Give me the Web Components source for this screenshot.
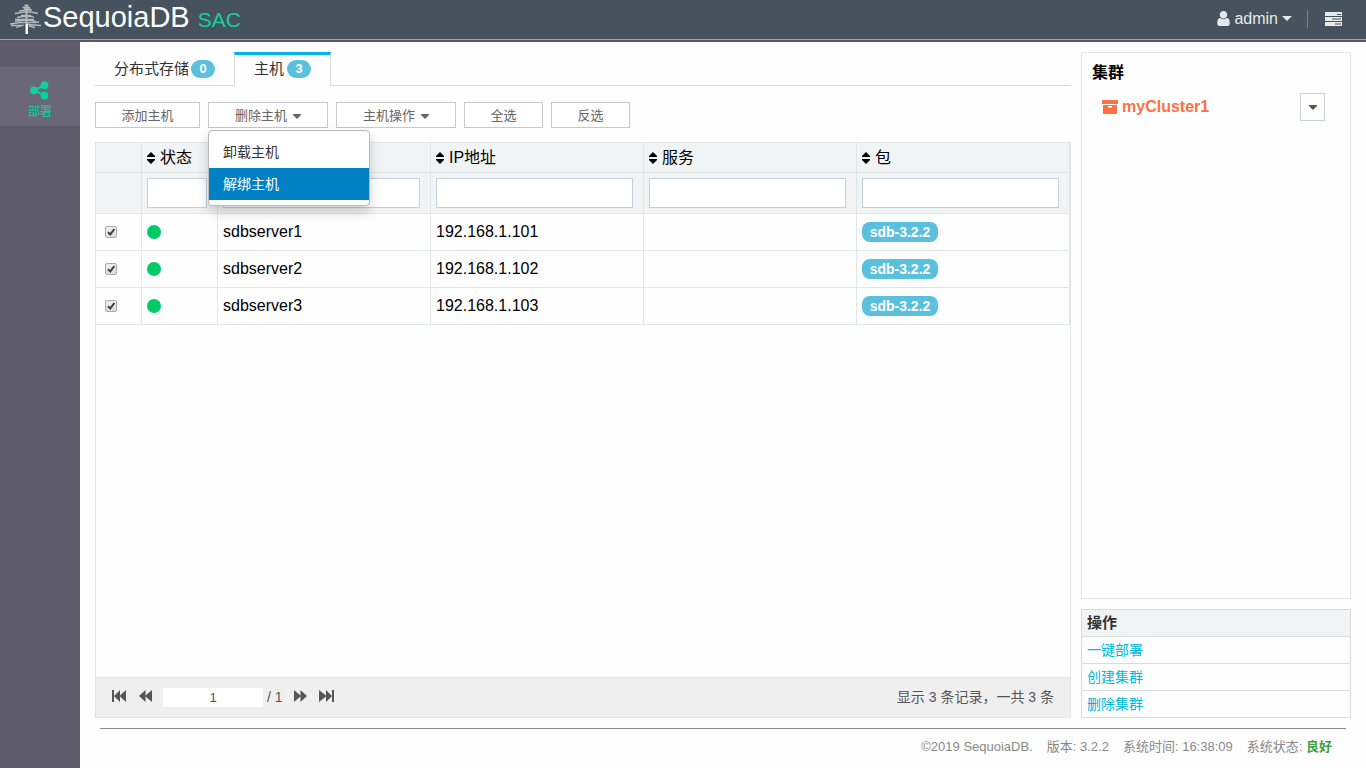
<!DOCTYPE html>
<html lang="zh-CN">
<head>
<meta charset="utf-8">
<title>SequoiaDB SAC</title>
<style>
html, body { margin: 0; height: 100%; background: #fefefe; }
body { font: 14px/20px "Liberation Sans", "Noto Sans CJK SC", sans-serif; color: #333; }
</style>
</head>
<body>
<sac-app></sac-app>
<script>
const define = (name, html, setup) => {
  const t = document.createElement('template');
  t.innerHTML = html;
  customElements.define(name, class extends HTMLElement {
    connectedCallback() {
      if (this.shadowRoot) return;
      this.attachShadow({ mode: 'open' }).append(t.content.cloneNode(true));
      if (setup) setup(this, this.shadowRoot);
    }
  });
};

/* icon: name -> [width, height, markup] */
const ICONS = {
  tree: [32, 31, `<g stroke="#b4babe" stroke-width="1.3" fill="none"><path d="M14.500 2.500h4M12.500 4.500h7.500M14 6.200h7M9 8.200l5-1h8M5 10.500l9-1.500h7l7 1.500M11 12.300h10M7 14.500l6-1h9l2 1M5 16.500h19M5 18.300l8-1h9l4 1.500M0 21l10-1.500h15l4-.5M1 22.500h12M18 21.500l13 1M6 24.500l8-2.500M19 23l6 1.500"/></g><path d="M15.500 1.500h2v18h-2z" fill="#b4babe"/><path d="M15.500 20.500h2.500V31h-2.500z" fill="#fff"/>`],
  user: [13, 15, `<svg viewBox="0 0 1280 1536" width="13" height="15"><path fill="currentColor" d="M1280 1271q0 109-62.5 187t-150.5 78h-854q-88 0-150.5-78t-62.5-187q0-85 8.5-160.5t31.5-152 58.5-131 94-89 134.5-34.5q131 128 313 128t313-128q76 0 134.5 34.5t94 89 58.5 131 31.5 152 8.5 160.5zm-256-887q0 159-112.5 271.5t-271.5 112.5-271.5-112.5-112.5-271.5 112.5-271.5 271.5-112.5 271.5 112.5 112.5 271.5z"/></svg>`],
  caret: [10, 5, `<path fill="currentColor" d="M0 0h10l-5 5z"/>`],
  smallcaret: [8, 5, `<path fill="currentColor" d="M0 0h8v1l-4 4-4-4z"/>`],
  tasks: [17, 14, `<path fill="currentColor" fill-rule="evenodd" d="M0 0h17v4H0zM12 2v1h4V2zM0 5h17v4H0zM7 6.500v1h9v-1zM0 10h17v4H0zM10 11.500v1h6v-1z"/>`],
  share: [20, 19, `<g fill="currentColor"><circle cx="4" cy="9.300" r="3.900"/><circle cx="14.500" cy="4.200" r="3.900"/><circle cx="14.500" cy="14.600" r="3.900"/><path d="M4 9.300l11-5M4 9.300l11 5.400" stroke="currentColor" stroke-width="2.200"/></g>`],
  sort: [8, 12, `<path fill="currentColor" d="M4 0l4 4v1H0V4zM0 7h8v1l-4 4-4-4z"/>`],
  dot: [14, 14, `<circle cx="7" cy="7" r="7" fill="currentColor"/>`],
  archive: [16, 14, `<path fill="currentColor" fill-rule="evenodd" d="M.5 0h15q.5 0 .5.500V4H0V.500Q0 0 .5 0zM1 5h14v8.500q0 .5-.5.500h-13q-.5 0-.5-.5zM6 6v1.500h4V6z"/>`],
  first: [16, 12, `<path fill="currentColor" d="M1 0h2v12H1zM3 6l6-6v5.500L15 0v12L9 6.500V12z"/>`],
  prev: [13, 12, `<path fill="currentColor" d="M0 6l6.500-6v5.500L13 0v12L6.500 6.500V12z"/>`],
  next: [13, 12, `<path fill="currentColor" d="M13 6L6.500 0v5.500L0 0v12l6.500-5.500V12z"/>`],
  last: [16, 12, `<path fill="currentColor" d="M13 0h2v12h-2zM13 6L7 0v5.500L0 0v12l7-5.500V12z"/>`]
};
define('sac-icon', `<style>:host{display:inline-block;flex:none;line-height:0}svg{display:block}</style>`, (el, root) => {
  const [w, h, body] = ICONS[el.getAttribute('name')];
  root.innerHTML += `<svg width="${w}" height="${h}" viewBox="0 0 ${w} ${h}" aria-hidden="true">${body}</svg>`;
});

define('sac-badge', `<style>
:host{display:inline-block;box-sizing:border-box;background:#5bc0de;color:#fff;font-weight:bold;font-size:13px;line-height:18px;padding:0 8px;border-radius:9px;min-width:24px;text-align:center}
:host([large]){font-size:14px;line-height:20px;border-radius:8px;min-width:76px;padding:0 7px}
</style><slot></slot>`);

define('sac-header', `<style>
:host{display:flex;align-items:center;box-sizing:border-box;height:42px;padding:0 24px 5px 10px;background:linear-gradient(#46525d 39px,#a5a5ae 39px,#a5a5ae 40px,#5c586a 40px);color:#e6e8ea}
.brand{display:flex;align-items:center;color:#fff;text-decoration:none;font-size:29px;line-height:35px;flex:1}
.brand sac-icon{margin-right:1px}
.brand small{font-size:21px;color:#18ce9c;margin-left:8px}
button{all:unset;display:flex;align-items:center;gap:4px;font-size:16px;line-height:20px;cursor:pointer}
.rule{width:1px;height:18px;background:#79818a;margin:0 17px 0 15px}
</style>
<a class="brand" href="#"><sac-icon name="tree"></sac-icon><span>SequoiaDB<small>SAC</small></span></a>
<button><sac-icon name="user"></sac-icon>admin<sac-icon name="caret"></sac-icon></button>
<span class="rule"></span>
<button aria-label="任务"><sac-icon name="tasks"></sac-icon></button>`);

define('sac-sidebar', `<style>
:host{display:block;width:80px;flex:none;box-sizing:border-box;background:#5e5b6a;padding-top:25px}
a{display:flex;flex-direction:column;align-items:center;box-sizing:border-box;height:59px;padding-top:14px;gap:2px;background:#6a6779;color:#0fcf9f;font-size:12px;line-height:20px;text-decoration:none}
</style><nav><a href="#"><sac-icon name="share"></sac-icon>部署</a></nav>`);

define('sac-tabs', `<style>
:host{display:flex;height:34px;box-sizing:border-box;font-size:15px;line-height:20px;box-shadow:inset 0 -1px #d9dbdc}
a{display:flex;align-items:center;box-sizing:border-box;gap:3px;padding:0 19px;color:#333;text-decoration:none}
a sac-badge{margin-left:-1px}
a+a sac-badge{margin-left:0}
a[aria-current]{background:#fefefe;border:1px solid #d9dbdc;border-top:3px solid #00b4e5;border-bottom:0;padding:0 19px 3px}
</style>
<a href="#">分布式存储<sac-badge>0</sac-badge></a><a href="#" aria-current="page">主机<sac-badge>3</sac-badge></a>`);

define('sac-toolbar', `<style>
:host{display:flex;gap:8px;margin:16px 0 14px}
.tool{display:flex;align-items:center;justify-content:center;gap:6px;box-sizing:border-box;height:26px;min-width:79px;padding:2px 16px 0;border:1px solid #c8c8c8;background:#fff;color:#666;font:13px/20px "Liberation Sans","Noto Sans CJK SC",sans-serif}
.wide{min-width:105px}.drop{min-width:120px}
.wrap{position:relative}
.menu{position:absolute;z-index:5;top:28px;left:0;width:162px;box-sizing:border-box;padding:5px 0;border:1px solid #bbb;border-radius:4px;background:#fff;box-shadow:0 6px 12px rgba(0,0,0,.18)}
.menu button{display:block;width:100%;border:0;background:none;text-align:left;padding:6px 14px;color:#333;font:14px/20px "Liberation Sans","Noto Sans CJK SC",sans-serif}
.menu .on{background:#0081c6;color:#fff}
</style>
<button class="tool wide">添加主机</button>
<div class="wrap"><button class="tool drop" aria-expanded="true">删除主机<sac-icon name="smallcaret"></sac-icon></button>
<div class="menu"><button>卸载主机</button><button class="on">解绑主机</button></div></div>
<button class="tool drop">主机操作<sac-icon name="smallcaret"></sac-icon></button>
<button class="tool">全选</button><button class="tool">反选</button>`);

define('sac-host-table', `<style>
:host{display:block;flex:1;color:#000;font-size:16px;line-height:20px}
table{width:100%;table-layout:fixed;border-collapse:separate;border-spacing:0}
th,td{box-sizing:border-box;border:solid #e1e5e6;border-width:0 1px 1px 0;padding:0 5px;text-align:left;font-weight:normal;vertical-align:middle}
thead th,thead td{background:#f0f4f5}
.titles th{height:30px}.filters td{height:41px;padding-right:10px}tbody td{height:37px}
.c1{width:46px}.c2{width:76px}
th button{all:unset;display:flex;align-items:center;gap:5px}
.filters input{display:block;width:100%;height:30px;box-sizing:border-box;border:1px solid #c6d0dc;background:#fff;padding:0 5px}
tbody td:first-child{padding-left:9px}
[type=checkbox]{appearance:none;display:block;margin:0;width:12px;height:12px;border:1px solid #aaa;border-radius:2px;background:url("data:image/svg+xml,%3Csvg xmlns='http://www.w3.org/2000/svg' viewBox='0 0 10 10'%3E%3Cpath d='M2 5.200L4.300 7.400 8.400 2' fill='none' stroke='%23404040' stroke-width='2'/%3E%3C/svg%3E"),linear-gradient(#eee,#ddd)}
td sac-icon,td sac-badge{display:block;color:#00cc66;width:max-content}td sac-badge{color:#fff}
</style>
<table><colgroup><col class="c1"><col class="c2"><col><col><col><col></colgroup>
<thead><tr class="titles"></tr><tr class="filters"></tr></thead><tbody></tbody></table>`, (el, root) => {
  const cols = [['状态', '状态'], ['', '主机名'], ['IP地址', 'IP地址'], ['服务', '服务'], ['包', '包']];
  root.querySelector('.titles').innerHTML = '<th></th>' + cols.map(([text, label]) => `<th scope="col"><button aria-label="${label}"><sac-icon name="sort"></sac-icon>${text}</button></th>`).join('');
  root.querySelector('.filters').innerHTML = '<td></td>' + cols.map(([, label]) => `<td><input type="text" aria-label="${label}"></td>`).join('');
  root.querySelector('tbody').innerHTML = [1, 2, 3].map(n => `<tr><td><input type="checkbox" checked aria-label="sdbserver${n}"></td><td><sac-icon name="dot"></sac-icon></td><td>sdbserver${n}</td><td>192.168.1.10${n}</td><td></td><td><sac-badge large>sdb-3.2.2</sac-badge></td></tr>`).join('');
});

define('sac-pager', `<style>
:host{display:flex;align-items:center;box-sizing:border-box;height:40px;border-top:1px solid #e1e5e6;background:#efefef;padding:0 16px 1px 15px;color:#555;font-size:14px;line-height:20px}
button{all:unset;margin-right:12px}
button:nth-of-type(2){margin-right:11px}
input{box-sizing:border-box;width:100px;height:19px;border:0;padding:0;background:#fff;text-align:center;color:#555;font:13px "Liberation Sans",sans-serif}
.total{margin:0 11px 0 4px}
.info{margin-left:auto}
</style>
<button aria-label="首页"><sac-icon name="first"></sac-icon></button><button aria-label="上一页"><sac-icon name="prev"></sac-icon></button>
<input type="text" value="1" aria-label="页码"><span class="total">/ 1</span>
<button aria-label="下一页"><sac-icon name="next"></sac-icon></button><button aria-label="末页"><sac-icon name="last"></sac-icon></button>
<span class="info">显示 3 条记录，一共 3 条</span>`);

define('sac-clusters', `<style>
:host{display:block;flex:1;box-sizing:border-box;border:1px solid #e1e5e6;padding:10px;font-size:16px;line-height:20px;font-weight:bold;color:#000}
h2{font-size:16px;margin:0}
.row{display:flex;align-items:center;gap:4px;margin-top:10px;padding:0 15px 0 10px}
a{display:flex;align-items:center;gap:4px;color:#ff7043;text-decoration:none;flex:1}
button{display:flex;align-items:center;justify-content:center;width:25px;height:28px;border:1px solid #c6d0dc;background:#fff;padding:0;color:#555}
</style><h2>集群</h2>
<div class="row"><a href="#"><sac-icon name="archive"></sac-icon>myCluster1</a><button aria-label="选项"><sac-icon name="smallcaret"></sac-icon></button></div>`);

define('sac-actions', `<style>
:host{display:block;border:1px solid #d9dbdc;margin-top:10px;line-height:26px}
h2{margin:0;padding:0 5px;font-size:15px;background:#f0f4f5;color:#333}
a{display:block;padding:0 5px;border-top:1px solid #d9dbdc;color:#00b8d9;text-decoration:none;font-size:14px}
</style><h2>操作</h2><a href="#">一键部署</a><a href="#">创建集群</a><a href="#">删除集群</a>`);

define('sac-footer', `<style>
:host{display:flex;justify-content:flex-end;gap:14px;box-sizing:border-box;height:40px;margin:10px 5px 0;padding:8px 14px 0;border-top:1px solid #888;color:#888;font-size:13px;line-height:20px}
b{color:#43a047}
</style><span>©2019 SequoiaDB.</span><span>版本: 3.2.2</span><span>系统时间: 16:38:09</span><span>系统状态: <b>良好</b></span>`);

define('sac-app', `<style>
:host{display:flex;flex-direction:column;min-height:100vh}
.body{display:flex;flex:1}
main{flex:1;min-width:0;display:flex;flex-direction:column;padding:10px 15px 0}
.cols{display:flex;flex:1;gap:10px}
.left{flex:1;min-width:0;display:flex;flex-direction:column}
.card{flex:1;display:flex;flex-direction:column;border:1px solid #e1e5e6}
aside{width:270px;display:flex;flex-direction:column}
</style>
<sac-header></sac-header>
<div class="body"><sac-sidebar></sac-sidebar>
<main><div class="cols">
<div class="left"><sac-tabs></sac-tabs><sac-toolbar></sac-toolbar><div class="card"><sac-host-table></sac-host-table><sac-pager></sac-pager></div></div>
<aside><sac-clusters></sac-clusters><sac-actions></sac-actions></aside>
</div><sac-footer></sac-footer></main></div>`);
</script>
</body>
</html>
